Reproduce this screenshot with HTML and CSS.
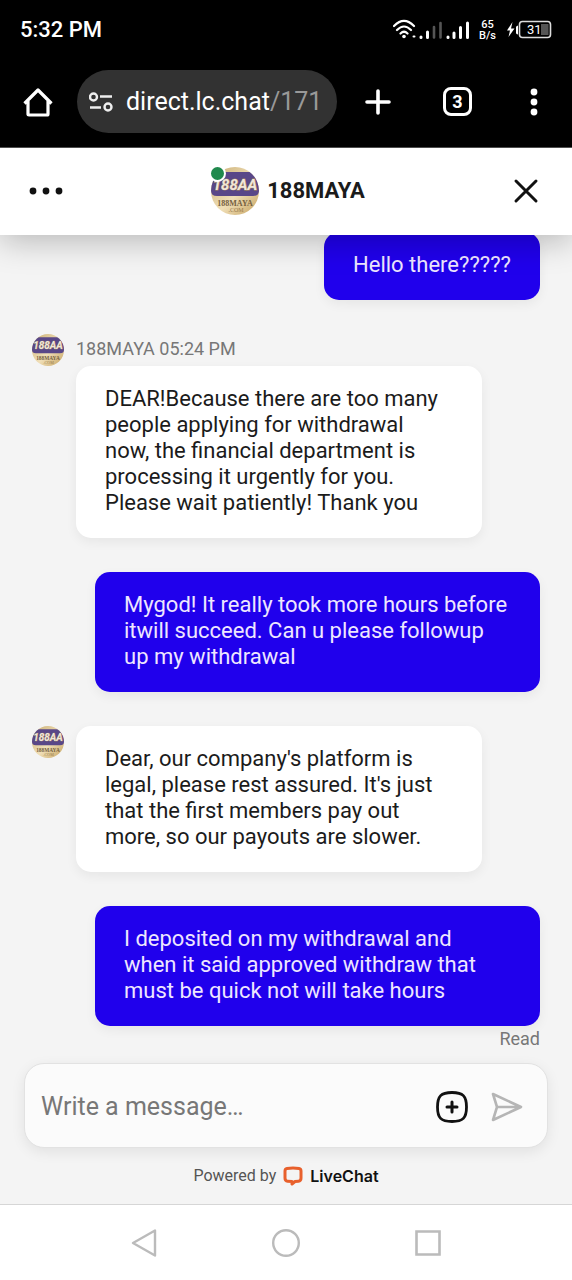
FILE: index.html
```html
<!DOCTYPE html>
<html lang="en">
<head>
<meta charset="utf-8">
<meta name="viewport" content="width=device-width, initial-scale=1">
<title>188MAYA chat</title>
<link rel="stylesheet" href="styles.css">
</head>
<body>
<svg class="defs" aria-hidden="true">
  <defs>
    <linearGradient id="gold" x1="0" y1="0" x2="1" y2="1">
      <stop offset="0" stop-color="#c9ad72"/>
      <stop offset="0.55" stop-color="#f0dfb8"/>
      <stop offset="1" stop-color="#c5a15c"/>
    </linearGradient>
    <clipPath id="disc"><circle cx="24" cy="24" r="24"/></clipPath>
    <symbol id="brand" viewBox="0 0 48 48">
      <g clip-path="url(#disc)">
        <rect width="48" height="48" fill="url(#gold)"/>
        <path d="M0 10Q0 5 6 5H42Q48 5 48 10V24Q48 29 42 29H6Q0 29 0 24Z" fill="#594788"/>
        <text x="24" y="23" class="brand-mark" text-anchor="middle">188AA</text>
        <text x="24" y="39" class="brand-name" text-anchor="middle">188MAYA</text>
        <text x="25" y="45" class="brand-com" text-anchor="middle">.COM</text>
      </g>
    </symbol>
  </defs>
</svg>

<div class="browser">
  <div class="status">
    <span class="clock">5:32 PM</span>
    <div class="indicators">
      <svg width="76" height="24" viewBox="0 0 76 24" fill="none" stroke="#fff" stroke-linecap="round" aria-hidden="true">
        <path d="M1 8Q11 -2 21 8M4 12Q11 5 18 12M7.500 15.500Q11 12 14.500 15.500" stroke-width="2.200"/>
        <circle cx="11" cy="18.500" r="1.800" fill="#fff" stroke="none"/>
        <path d="M20.500 18.500h1" stroke-width="2"/>
        <path d="M28 19v.500M34.500 14v5.500M55 19v.500M61 15v4.500M67.500 9.500v10M74.500 5v14.500" stroke-width="3"/>
        <path d="M41 9v10.500M47.500 5v14.500" stroke="#555" stroke-width="2.600"/>
      </svg>
      <span class="rate">65<br>B/s</span>
      <svg width="46" height="20" viewBox="0 0 46 20" aria-hidden="true">
        <path d="M6.500 2L1 10.500h3L2.500 17 8.500 8.500H5Z" fill="#fff"/>
        <path d="M10 7Q10 6 12 5.500v9Q10 14 10 13Z" fill="#fff"/>
        <rect x="13.500" y="1.500" width="31" height="16" rx="3" fill="none" stroke="#ddd" stroke-width="1.600"/>
        <rect x="35" y="4" width="7.500" height="11" fill="#555"/>
        <text x="21" y="14" class="battery">31</text>
      </svg>
    </div>
  </div>
  <div class="toolbar">
    <button class="tool" aria-label="Home">
      <svg width="32" height="32" viewBox="0 0 32 32" fill="none" stroke="#fff" stroke-width="3.200"><path d="M2.500 17.500L16 4l13.500 13.500M6 14.500v14Q6 29 7 29H25Q26 29 26 28V14.500" stroke-linejoin="round"/></svg>
    </button>
    <button class="address" aria-label="Address">
      <svg width="24" height="20" viewBox="0 0 24 20" fill="none" stroke="#eee" stroke-width="2.400"><circle cx="4.500" cy="5" r="3.500"/><path d="M11 4.500h12M1 15.500h11"/><circle cx="19" cy="15" r="3.500"/></svg>
      <span class="url">direct.lc.chat<span class="path">/171</span></span>
    </button>
    <button class="tool add" aria-label="New tab">
      <svg width="28" height="28" viewBox="0 0 28 28" fill="none" stroke="#fff" stroke-width="3.600" stroke-linecap="round"><path d="M14 3v22M3 14h22"/></svg>
    </button>
    <button class="tool tabs" aria-label="Tabs">3</button>
    <button class="tool more" aria-label="Menu">
      <svg width="10" height="28" viewBox="0 0 10 28" fill="#fff"><circle cx="5" cy="4" r="3.400"/><circle cx="5" cy="14" r="3.400"/><circle cx="5" cy="24" r="3.400"/></svg>
    </button>
  </div>
</div>

<header class="chat-head">
  <button class="plain" aria-label="Options">
    <svg width="34" height="8" viewBox="0 0 34 8" fill="#111"><circle cx="4" cy="4" r="3.400"/><circle cx="17" cy="4" r="3.400"/><circle cx="30" cy="4" r="3.400"/></svg>
  </button>
  <div class="agent">
    <span class="portrait">
      <svg width="48" height="48"><use href="#brand"/></svg>
      <span class="online"></span>
    </span>
    <h1 class="agent-name">188MAYA</h1>
  </div>
  <button class="plain" aria-label="Close">
    <svg width="26" height="26" viewBox="0 0 26 26" fill="none" stroke="#111" stroke-width="3" stroke-linecap="round"><path d="M3 3l20 20M23 3L3 23"/></svg>
  </button>
</header>

<main class="messages">
  <p class="bubble mine">Hello there?????</p>
  <div class="theirs">
    <svg class="avatar" width="32" height="32"><use href="#brand"/></svg>
    <div class="stack">
      <span class="meta">188MAYA 05:24 PM</span>
      <p class="bubble">DEAR!Because there are too many people applying for withdrawal<br>now, the financial department is processing it urgently for you. Please wait patiently! Thank you</p>
    </div>
  </div>
  <p class="bubble mine">Mygod! It really took more hours before itwill succeed. Can u please followup up my withdrawal</p>
  <div class="theirs">
    <svg class="avatar" width="32" height="32"><use href="#brand"/></svg>
    <div class="stack">
      <p class="bubble">Dear, our company's platform is legal, please rest assured. It's just that the first members pay out more, so our payouts are slower.</p>
    </div>
  </div>
  <p class="bubble mine">I deposited on my withdrawal and<br>when it said approved withdraw that must be quick not will take hours</p>
  <span class="read">Read</span>
</main>

<footer class="foot">
  <form class="composer">
    <input class="field" type="text" placeholder="Write a message…" aria-label="Write a message">
    <button class="plain" type="button" aria-label="Attach">
      <svg width="32" height="32" viewBox="0 0 32 32" fill="none" stroke="#111" stroke-width="2.800" stroke-linecap="round"><path d="M16 1.500C27 1.500 30.500 5 30.500 16S27 30.500 16 30.500 1.500 27 1.500 16 5 1.500 16 1.500Z"/><path d="M16 11v10M11 16h10" stroke-width="3"/></svg>
    </button>
    <button class="plain" type="submit" aria-label="Send">
      <svg width="32" height="30" viewBox="0 0 32 30" fill="none" stroke="#b5b5b5" stroke-width="2.600" stroke-linejoin="round"><path d="M2 2l28 13L2 28l4-13ZM6 15h23"/></svg>
    </button>
  </form>
  <a class="powered" href="#">Powered by
    <svg width="20" height="20" viewBox="0 0 20 20" fill="none" stroke="#e8602c" stroke-width="3" stroke-linejoin="round"><path d="M4 2.500Q10 1.500 16 2.500Q18 2.800 18 5V12Q18 15 15.500 15.200L12 15.500 9 18V15.500L4.500 15.200Q2 15 2 12V5Q2 2.800 4 2.500Z"/></svg>
    <strong class="livechat">LiveChat</strong>
  </a>
</footer>

<nav class="system">
  <button class="plain" aria-label="Back"><svg width="28" height="28" viewBox="0 0 28 28" fill="none" stroke="#bbb" stroke-width="2.400" stroke-linejoin="round"><path d="M25 1.500v25L3 14Z"/></svg></button>
  <button class="plain" aria-label="Home screen"><svg width="28" height="28" viewBox="0 0 28 28" fill="none" stroke="#bbb" stroke-width="2.400"><circle cx="14" cy="14" r="12.800"/></svg></button>
  <button class="plain" aria-label="Recent apps"><svg width="28" height="28" viewBox="0 0 28 28" fill="none" stroke="#bbb" stroke-width="2.600"><path d="M2.500 2.500h23v23h-23z"/></svg></button>
</nav>
</body>
</html>
```
FILE: styles.css
```css
* { box-sizing: border-box; }

body {
  margin: 0;
  height: 100vh;
  display: flex;
  flex-direction: column;
  background: #f4f4f4;
  color: #1b1b1b;
  font: 22px/26px Roboto, "Liberation Sans", sans-serif;
}

svg { display: block; flex: none; }
p, h1 { margin: 0; }
button { margin: 0; padding: 0; border: 0; background: none; font: inherit; color: inherit; }

.defs { position: absolute; width: 0; height: 0; }
.brand-mark { font: italic 700 15px Roboto, sans-serif; fill: #f1e6da; stroke: #a4875a; stroke-width: 1px; paint-order: stroke; }
.brand-name { font: 700 8px "Liberation Serif", serif; fill: #75603f; }
.brand-com { font: 6px "Liberation Serif", serif; fill: #96794a; }

.browser {
  flex: none;
  background: #000;
  color: #fff;
  border-bottom: 1px solid #555;
}

.status {
  display: flex;
  justify-content: space-between;
  align-items: center;
  height: 60px;
  padding: 0 20px;
}
.clock { font-weight: 500; }
.indicators { display: flex; align-items: center; gap: 10px; }
.rate { font-size: 11px; line-height: 11px; font-weight: 500; text-align: center; }
.battery { font: 13px Roboto, sans-serif; fill: #fff; }

.toolbar {
  display: flex;
  align-items: center;
  padding: 10px 33px 14px 22px;
}
.tool { display: grid; place-items: center; flex: none; }
.address {
  flex: 1;
  min-width: 0;
  display: flex;
  align-items: center;
  gap: 13px;
  height: 63px;
  margin: 0 27px 0 23px;
  padding: 0 8px 0 12px;
  border-radius: 32px;
  background: #323232;
}
.url { flex: 1; overflow: hidden; white-space: nowrap; font-size: 25px; line-height: 32px; text-align: left; }
.path { color: #999; }
.tabs {
  width: 29px;
  height: 29px;
  margin: 0 57px 0 51px;
  border: 3px solid #fff;
  border-radius: 8px;
  font-size: 18px;
  line-height: 20px;
  font-weight: 700;
}

.chat-head {
  position: relative;
  z-index: 1;
  flex: none;
  display: flex;
  align-items: center;
  justify-content: space-between;
  height: 87px;
  padding: 0 33px 2px 29px;
  background: #fff;
  box-shadow: 0 6px 32px rgba(0, 0, 0, 0.25);
}
.agent { display: flex; align-items: center; gap: 8px; }
.portrait { position: relative; }
.online {
  position: absolute;
  top: -2px;
  left: -2px;
  width: 17px;
  height: 17px;
  border: 2px solid #fff;
  border-radius: 50%;
  background: #20894d;
}
.agent-name { font-size: 22px; font-weight: 700; }

.messages {
  flex: 1;
  min-height: 0;
  overflow: hidden;
  display: flex;
  flex-direction: column;
  justify-content: flex-end;
  gap: 34px;
  padding: 0 32px 11px;
}
.bubble {
  flex: none;
  padding: 20px 29px 22px;
  border-radius: 15px;
  background: #fff;
  box-shadow: 0 4px 12px rgba(0, 0, 0, 0.06);
}
.mine {
  align-self: flex-end;
  max-width: calc(100% - 63px);
  background: #2000ec;
  color: #eee6ff;
}
.theirs { flex: none; display: flex; align-items: flex-start; gap: 12px; }
.stack { width: 80%; }
.meta { display: block; padding: 2px 0 4px; font-size: 18px; line-height: 26px; color: #777; }
.read { align-self: flex-end; margin-top: -34px; font-size: 18px; line-height: 26px; color: #777; }

.foot { flex: none; padding: 0 24px; }
.composer {
  display: flex;
  align-items: center;
  gap: 23px;
  height: 85px;
  padding: 3px 24px 0 16px;
  border: 1px solid #e2e2e2;
  border-radius: 20px;
  background: #fbfbfb;
  box-shadow: 0 4px 14px rgba(0, 0, 0, 0.08);
}
.field {
  flex: 1;
  min-width: 0;
  padding: 0;
  border: 0;
  background: none;
  font: 25px/32px Roboto, "Liberation Sans", sans-serif;
  color: #1b1b1b;
}
.field::placeholder { color: #777; opacity: 1; }
.powered {
  display: flex;
  align-items: center;
  justify-content: center;
  gap: 7px;
  height: 56px;
  font-size: 16px;
  line-height: 24px;
  color: #555;
  text-decoration: none;
}
.livechat { font-family: Inter, Roboto, sans-serif; font-size: 16px; font-weight: 600; color: #111; }

.system {
  flex: none;
  display: flex;
  justify-content: center;
  align-items: center;
  gap: 20%;
  height: 76px;
  border-top: 1px solid #d6d6d6;
  background: #fff;
}
```
